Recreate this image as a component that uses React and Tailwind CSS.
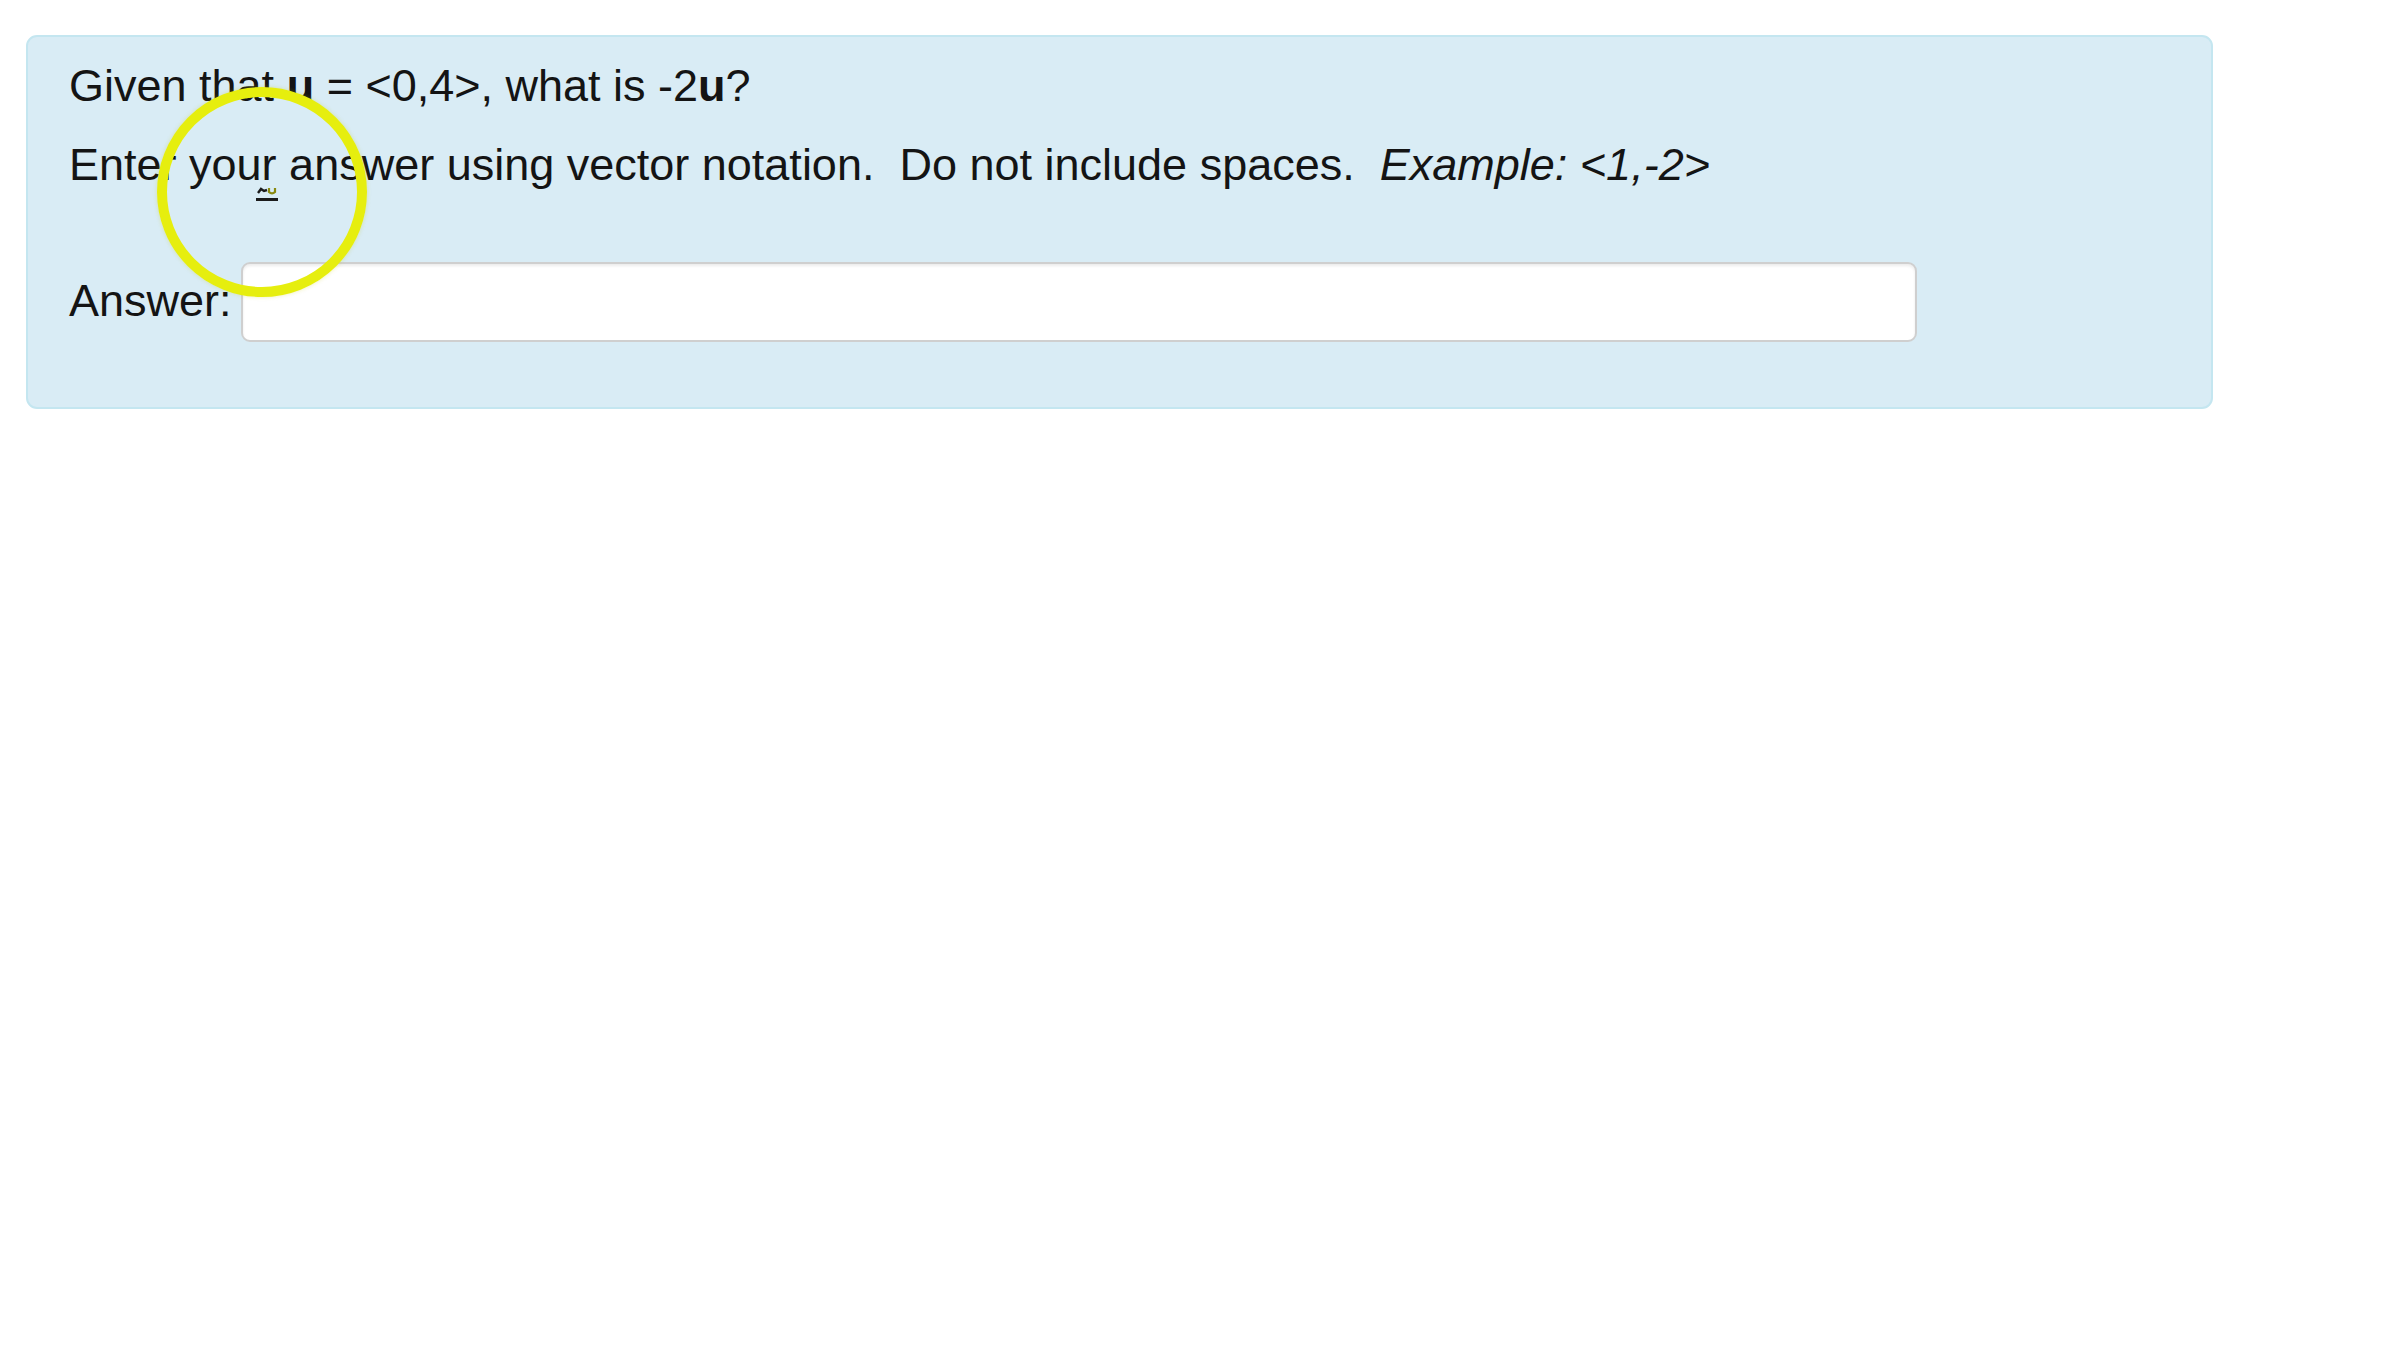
import React from "react";

const CursorMark = () => (
  <svg
    width="24"
    height="16"
    viewBox="0 0 24 16"
    className="absolute left-[255px] top-[186px]"
  >
    <path d="M3 7 L6 3 L9 5 L12 4" stroke="#1b1b1b" strokeWidth="2.4" fill="none" />
    <path d="M14 2 L14 6 Q17 9 20 6 L20 2" stroke="#8a8a10" strokeWidth="2.2" fill="none" />
    <rect x="1" y="12" width="22" height="3" fill="#1b1b1b" />
  </svg>
);

export default function App() {
  return (
    <div className="relative min-h-screen w-full bg-white font-['Liberation_Sans',Arial,sans-serif] text-[#141414]">
      <div className="pl-[26px] pt-[35px] w-[2213px]">
        <div className="rounded-[11px] border-2 border-[#c4e6f0] bg-[#d9ecf5] pl-[41px] pr-6 pt-[9px] pb-[65px]">
          <p className="text-[45px] leading-[79px]">
            Given that <b>u</b> = &lt;0,4&gt;, what is -2<b>u</b>?
          </p>
          <p className="text-[45px] leading-[79px]">
            Enter your answer using vector notation.{"\u00a0 "}Do not include
            spaces.{"\u00a0 "}
            <i>Example: &lt;1,-2&gt;</i>
          </p>
          <div className="mt-[58px] flex h-[80px] items-center gap-[9px]">
            <span className="pb-[4px] text-[45px] leading-none">Answer:</span>
            <input
              type="text"
              className="h-[80px] w-[1676px] rounded-[9px] border-2 border-[#cfcfcf] bg-white shadow-[inset_0_2px_3px_rgba(0,0,0,0.08)] outline-none"
            />
          </div>
        </div>
      </div>

      {/* cursor highlight from the recording */}
      <div className="pointer-events-none absolute left-[157px] top-[87px] h-[210px] w-[210px] rounded-full border-[10px] border-[#e6ee0e] shadow-[0_0_4px_rgba(200,200,0,0.3)]" />
      <CursorMark />
    </div>
  );
}
